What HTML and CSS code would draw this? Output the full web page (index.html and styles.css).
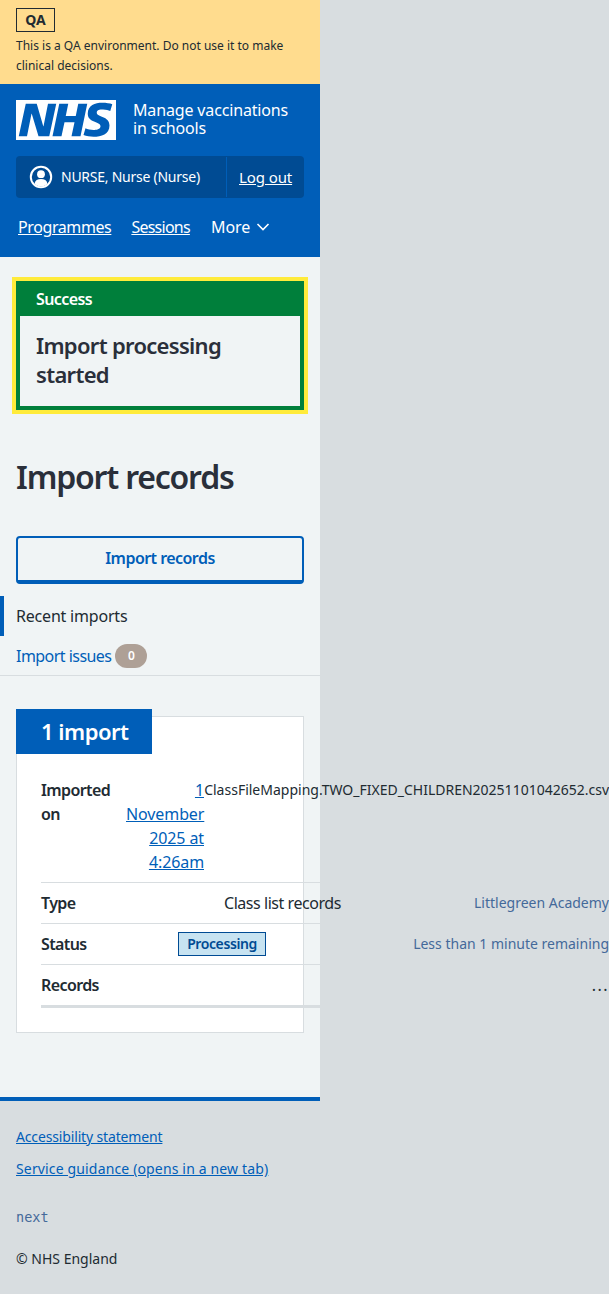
FILE: index.html
```html
<!DOCTYPE html>
<html lang="en">
<head>
<meta charset="UTF-8">
<meta name="viewport" content="width=device-width, initial-scale=1.0">
<title>Import records</title>
<link rel="stylesheet" href="styles.css">
</head>
<body>

<div class="page">
    <div class="env-banner">
        <strong class="env-tag">QA</strong>
        <p>This is a QA environment. Do not use it to make clinical decisions.</p>
    </div>

    <header class="header">
        <div class="brand">
            <svg class="logo" viewBox="0 0 40 16" width="100" height="40" aria-label="NHS">
                <path fill="#fff" d="M0 0h40v16H0z"/>
                <path fill="#005eb8" d="M3.9 1.5h4.4l2.6 9h.1l1.8-9h3.3l-2.8 13H9l-2.7-9h-.1l-1.8 9H1.1M17.3 1.5h3.6l-1 4.9h4l1-4.9h3.6l-2.7 13h-3.6l1.2-5.6h-4l-1.2 5.6h-3.6M37.7 4.4c-.7-.3-1.6-.6-2.9-.6-1.4 0-2.5.2-2.5 1.3 0 1.8 5.1 1.2 5.1 5.1 0 3.6-3.3 4.5-6.4 4.5-1.3 0-2.9-.3-4-.7l.8-2.7c.7.4 2.1.7 3.2.7s2.8-.2 2.8-1.5c0-2.1-5.1-1.3-5.1-5 0-3.4 2.9-4.4 5.8-4.4 1.6 0 3.1.2 4 .6"/>
            </svg>
            <span class="service-name">Manage vaccinations in schools</span>
        </div>
        <div class="account">
            <div class="account-user">
                <svg class="account-icon" viewBox="0 0 24 24" width="24" height="24">
                    <circle cx="12" cy="12" r="10.2" fill="none" stroke="#fff" stroke-width="2"/>
                    <circle cx="12" cy="9.2" r="3.9" fill="#fff"/>
                    <path fill="#fff" d="M5.6 18.6c.5-3.2 3-4.6 6.4-4.6s5.900 1.400 6.400 4.600c-1.600 1.900-3.900 3-6.400 3s-4.800-1.100-6.400-3z"/>
                </svg>
                <span>NURSE, Nurse (Nurse)</span>
            </div>
            <a class="account-logout" href="#">Log out</a>
        </div>
        <nav class="nav">
            <a href="#">Programmes</a>
            <a class="nav-sessions" href="#">Sessions</a>
            <span class="nav-more">More
                <svg viewBox="0 0 14 8" width="14" height="8"><path d="M1.500 1l5.500 5.500L12.500 1" fill="none" stroke="#fff" stroke-width="1.600"/></svg>
            </span>
        </nav>
    </header>

    <main class="main">
        <div class="flash">
            <div class="flash-title">Success</div>
            <div class="flash-body">Import processing started</div>
        </div>

        <h1>Import records</h1>

        <a class="button" href="#">Import records</a>

        <ul class="tabs">
            <li class="tabs-current">Recent imports</li>
            <li><a href="#">Import issues</a> <span class="count">0</span></li>
        </ul>

        <section class="card">
            <h2 class="card-heading">1 import</h2>
            <div class="records">
                <div class="record record-imported">
                    <strong class="record-label">Imported on</strong>
                    <a class="record-date" href="#">1 November 2025 at 4:26am</a>
                    <span>ClassFileMapping.TWO_FIXED_CHILDREN20251101042652.csv</span>
                </div>
                <div class="record record-type">
                    <strong class="record-label">Type</strong>
                    <span class="record-value">Class list records</span>
                    <span class="secondary">Littlegreen Academy</span>
                </div>
                <div class="record record-status">
                    <strong class="record-label">Status</strong>
                    <span class="tag">Processing</span>
                    <span class="secondary">Less than 1 minute remaining</span>
                </div>
                <div class="record record-count">
                    <strong class="record-label">Records</strong>
                    <span></span>
                    <span class="record-dots">...</span>
                </div>
            </div>
        </section>
    </main>

    <footer class="footer">
        <ul>
            <li><a class="footer-a11y" href="#">Accessibility statement</a></li>
            <li><a class="footer-guidance" href="#">Service guidance (opens in a new tab)</a></li>
        </ul>
        <code>next</code>
        <p>© NHS England</p>
    </footer>
</div>

</body>
</html>
```

FILE: styles.css
```css
body {
    font-family: "Noto Sans", Arial, sans-serif;
    font-size: 16px;
    line-height: 24px;
    margin: 0;
    color: #212b32;
    background-color: #d8dde0;
}
a {
    color: #005eb8;
}
.page {
    width: 320px;
}
.env-banner {
    background-color: #ffdc8e;
    padding: 8px 16px 8px;
    height: 68px;
    font-size: 12px;
    line-height: 20px;
}
.env-banner p {
    margin: 4px 0 0;
}
.env-tag {
    display: block;
    width: 39px;
    box-sizing: border-box;
    height: 24px;
    border: 1px solid #212b32;
    font-size: 14px;
    line-height: 22px;
    text-align: center;
}
.header {
    background-color: #005eb8;
    color: #fff;
    padding: 16px 16px 0;
    height: 157px;
}
.header a {
    color: #fff;
}
.brand {
    display: flex;
    align-items: center;
    gap: 17px;
}
.logo {
    flex: none;
}
.service-name {
    font-size: 16px;
    letter-spacing: -0.15px;
    line-height: 18px;
    width: 170px;
    margin-top: -2px;
}
.account {
    display: flex;
    margin-top: 16px;
    height: 42px;
    background-color: #004b93;
    border-radius: 4px;
    font-size: 14px;
    letter-spacing: -0.25px;
    align-items: stretch;
}
.account-user {
    display: flex;
    align-items: center;
    gap: 8px;
    padding-left: 13px;
    width: 197px;
    border-right: 1px solid #005eb8;
    margin: 1px 0;
}
.account-logout {
    padding-left: 12px;
    font-size: 15px;
    letter-spacing: -0.1px;
    line-height: 42px;
}
.nav {
    display: flex;
    gap: 20px;
    padding: 17px 2px 0;
    align-items: center;
    letter-spacing: -0.4px;
}
.nav-sessions {
    letter-spacing: -0.75px;
}
.nav-more {
    display: flex;
    align-items: center;
    gap: 6px;
    margin-left: 1px;
    letter-spacing: 0;
}
.main {
    background-color: #f0f4f5;
    padding: 24px 0 64px;
}
.flash {
    margin: 0 16px;
    border: 4px solid #007f3b;
    box-shadow: 0 0 0 4px #ffeb3b;
    background-color: #007f3b;
}
.flash-title {
    color: #fff;
    font-weight: 600;
    font-size: 16px;
    letter-spacing: -0.6px;
    padding: 2px 16px 5px;
}
.flash-body {
    background-color: #f0f4f5;
    font-size: 22px;
    letter-spacing: -0.7px;
    line-height: 29px;
    font-weight: 600;
    color: #2a2f3a;
    padding: 15px 16px 17px;
}
h1 {
    font-size: 32px;
    letter-spacing: -1.2px;
    line-height: 40px;
    font-weight: 600;
    color: #2a2f3a;
    margin: 47px 16px 39px;
}
.button {
    display: block;
    margin: 0 16px;
    height: 48px;
    box-sizing: border-box;
    border: 2px solid #005eb8;
    border-bottom-width: 4px;
    border-radius: 4px;
    font-weight: 600;
    letter-spacing: -0.55px;
    text-align: center;
    line-height: 40px;
    text-decoration: none;
}
.tabs {
    list-style-type: none;
    margin: 12px 0 0;
    padding: 0;
    height: 79px;
    letter-spacing: -0.54px;
    border-bottom: 1px solid #d8dde0;
}
.tabs li {
    height: 40px;
    line-height: 40px;
    padding-left: 16px;
    display: flex;
    align-items: center;
    gap: 4px;
}
.tabs a {
    text-decoration: none;
}
.tabs-current {
    border-left: 4px solid #005eb8;
    padding-left: 12px !important;
    letter-spacing: -0.2px;
}
.count {
    background-color: #aea096;
    color: #fff;
    font-size: 12px;
    font-weight: 600;
    letter-spacing: 0;
    line-height: 24px;
    width: 32px;
    text-align: center;
    border-radius: 12px;
}
.card {
    position: relative;
    margin: 40px 16px 0;
    height: 317px;
    box-sizing: border-box;
    padding: 0 24px;
    background-color: #fff;
    border: 1px solid #d8dde0;
}
.card-heading {
    margin: -8px 0 0 -25px;
    width: 136px;
    height: 45px;
    box-sizing: border-box;
    padding-left: 25px;
    background-color: #005eb8;
    color: #fff;
    font-size: 22px;
    letter-spacing: -0.5px;
    line-height: 44px;
    font-weight: 600;
}
.records {
    width: 568px;
    margin-top: 24px;
    border-bottom: 3px solid #d8dde0;
}
.record {
    display: grid;
    padding: 8px 0;
    border-top: 1px solid #d8dde0;
}
.record-imported {
    grid-template-columns: 85px 78px 1fr;
    padding-top: 0;
    border-top: 0;
}
.record-type {
    grid-template-columns: 183px 117px 1fr;
}
.record-status {
    grid-template-columns: 137px 88px 1fr;
}
.record-count {
    grid-template-columns: 183px 117px 1fr;
}
.record-label {
    font-weight: 600;
    letter-spacing: -0.6px;
}
.record-value {
    letter-spacing: -0.45px;
    white-space: nowrap;
}
.record span:last-child {
    text-align: right;
}
.record-imported span:last-child {
    font-size: 14px;
    white-space: nowrap;
}
.record-date {
    letter-spacing: -0.1px;
    text-align: right;
}
.record-dots {
    letter-spacing: 1.5px;
}
.secondary {
    color: #44699a;
    font-size: 14px;
}
.tag {
    border: 1px solid #004b93;
    background-color: #c7e3f1;
    color: #004b93;
    font-size: 14px;
    letter-spacing: -0.4px;
    font-weight: 600;
    line-height: 22px;
    text-align: center;
}
.footer {
    border-top: 4px solid #005eb8;
    padding: 24px 16px;
    font-size: 14px;
}
.footer ul {
    list-style-type: none;
    margin: 0;
    padding: 0;
}
.footer li {
    margin-bottom: 8px;
}
.footer-a11y {
    letter-spacing: -0.15px;
}
.footer-guidance {
    letter-spacing: 0.15px;
}
.footer code {
    display: block;
    margin-top: 24px;
    color: #44699a;
    font-family: "DejaVu Sans Mono", monospace;
    font-size: 13.5px;
}
.footer p {
    margin: 18px 0 0;
}
```
